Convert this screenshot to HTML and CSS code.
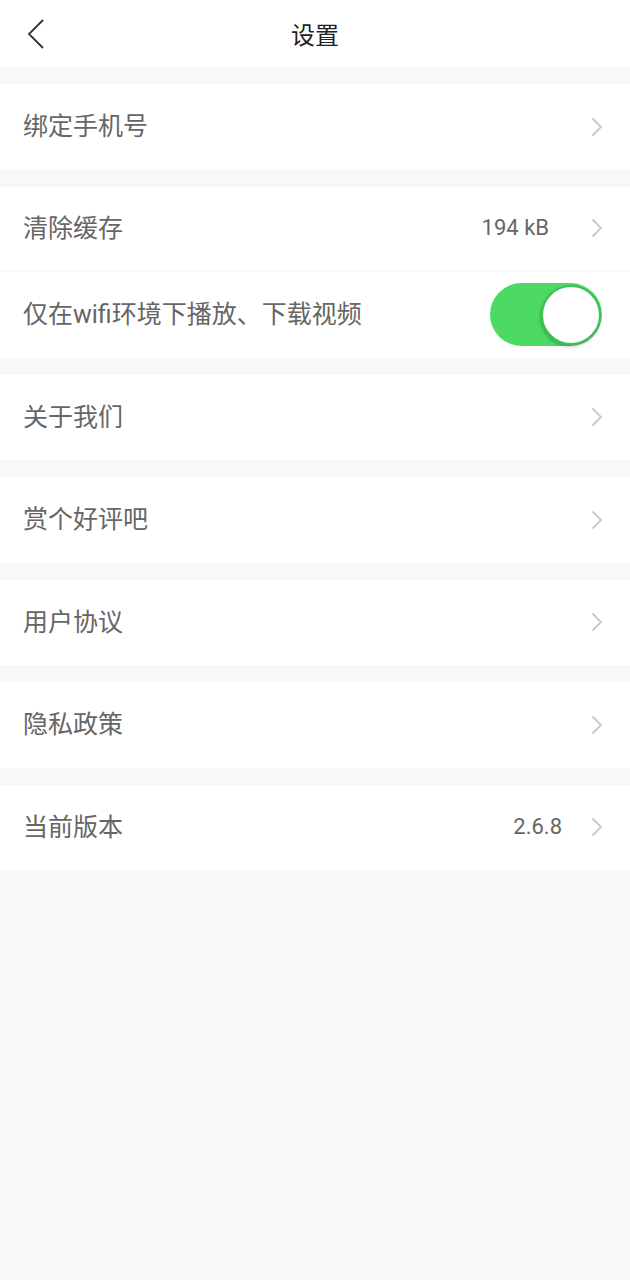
FILE: index.html
```html
<!DOCTYPE html>
<html lang="zh-CN">
<head>
<meta charset="utf-8">
<title>设置</title>
<link rel="stylesheet" href="styles.css">
</head>
<body>
<div class="page">
  <header class="topbar">
    <svg class="back" width="18" height="32" viewBox="0 0 18 32"><path d="M16 2 L2 16 L16 30" fill="none" stroke="#333" stroke-width="1.8" stroke-linejoin="miter"/></svg>
    <h1 class="title">设置</h1>
  </header>

  <div class="group">
    <div class="row"><span class="label">绑定手机号</span><span class="right"><svg class="chev" width="12" height="20" viewBox="0 0 12 20"><path d="M1.5 1.5 L10 10 L1.5 18.5" fill="none" stroke="#c8c8c8" stroke-width="1.8"/></svg></span></div>
  </div>

  <div class="group">
    <div class="row divided"><span class="label">清除缓存</span><span class="right"><span class="value cache">194 kB</span><svg class="chev" width="12" height="20" viewBox="0 0 12 20"><path d="M1.5 1.5 L10 10 L1.5 18.5" fill="none" stroke="#c8c8c8" stroke-width="1.8"/></svg></span></div>
    <div class="row"><span class="label">仅在wifi环境下播放、下载视频</span><span class="toggle"><span class="knob"></span></span></div>
  </div>

  <div class="group">
    <div class="row"><span class="label">关于我们</span><span class="right"><svg class="chev" width="12" height="20" viewBox="0 0 12 20"><path d="M1.5 1.5 L10 10 L1.5 18.5" fill="none" stroke="#c8c8c8" stroke-width="1.8"/></svg></span></div>
  </div>

  <div class="group">
    <div class="row"><span class="label">赏个好评吧</span><span class="right"><svg class="chev" width="12" height="20" viewBox="0 0 12 20"><path d="M1.5 1.5 L10 10 L1.5 18.5" fill="none" stroke="#c8c8c8" stroke-width="1.8"/></svg></span></div>
  </div>

  <div class="group">
    <div class="row"><span class="label">用户协议</span><span class="right"><svg class="chev" width="12" height="20" viewBox="0 0 12 20"><path d="M1.5 1.5 L10 10 L1.5 18.5" fill="none" stroke="#c8c8c8" stroke-width="1.8"/></svg></span></div>
  </div>

  <div class="group">
    <div class="row"><span class="label">隐私政策</span><span class="right"><svg class="chev" width="12" height="20" viewBox="0 0 12 20"><path d="M1.5 1.5 L10 10 L1.5 18.5" fill="none" stroke="#c8c8c8" stroke-width="1.8"/></svg></span></div>
  </div>

  <div class="group">
    <div class="row"><span class="label">当前版本</span><span class="right"><span class="value">2.6.8</span><svg class="chev" width="12" height="20" viewBox="0 0 12 20"><path d="M1.5 1.5 L10 10 L1.5 18.5" fill="none" stroke="#c8c8c8" stroke-width="1.8"/></svg></span></div>
  </div>
</div>
</body>
</html>
```
FILE: styles.css
```css
html, body {
  margin: 0;
  padding: 0;
  background: #f8f8f8;
}
body {
  font-family: "Noto Sans CJK SC", "Noto Sans", sans-serif;
  width: 630px;
  min-height: 1280px;
}
.page {
  display: flex;
  flex-direction: column;
  gap: 17px;
}
.topbar {
  height: 67px;
  background: #fff;
  display: flex;
  align-items: center;
  justify-content: center;
  position: relative;
}
.back {
  position: absolute;
  left: 27px;
  top: 18px;
}
.title {
  margin: 0;
  font-size: 24px;
  font-weight: 400;
  color: #222;
  line-height: 1;
}
.group {
  background: #fff;
  display: flex;
  flex-direction: column;
}
.row {
  height: 85.5px;
  box-sizing: border-box;
  display: flex;
  align-items: center;
  justify-content: space-between;
  padding: 0 27px 0 23px;
}
.row.divided {
  border-bottom: 2px solid #f9f9f9;
}
.label {
  font-family: Roboto, "Noto Sans CJK SC", sans-serif;
  font-size: 25px;
  color: #666;
  line-height: 1;
}
.right {
  display: flex;
  align-items: center;
  gap: 29px;
}
.value {
  font-family: Roboto, "Noto Sans CJK SC", sans-serif;
  font-size: 22px;
  color: #666;
  line-height: 1;
}
.value.cache {
  margin-right: 13px;
}
.chev {
  display: block;
}
.toggle {
  width: 112px;
  height: 63px;
  border-radius: 32px;
  background: #4cd964;
  display: flex;
  align-items: center;
  justify-content: flex-end;
  margin-right: 1px;
  box-sizing: border-box;
}
.knob {
  width: 60px;
  height: 60px;
  border-radius: 50%;
  background: #fff;
  box-sizing: border-box;
  border: 2px solid #3fbf55;
  box-shadow: -1px 2px 3px rgba(0, 0, 0, 0.2);
  margin-right: 1px;
}
```
